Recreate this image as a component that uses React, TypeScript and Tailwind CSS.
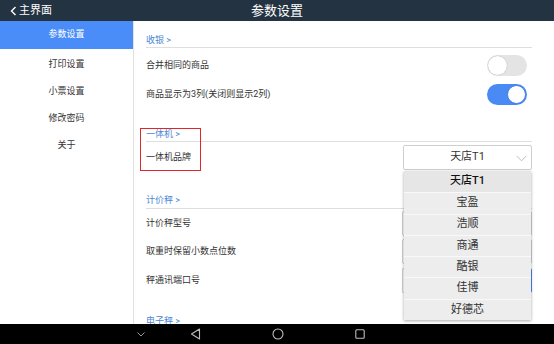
import React from "react";

const font = "font-['Roboto','Noto_Sans_CJK_SC',sans-serif]";

function Toggle({ on }: { on: boolean }) {
  return on ? (
    <div className="w-[40px] h-[21px] rounded-full bg-[#4a8af4] relative">
      <div className="absolute right-[1px] top-[1px] w-[19px] h-[19px] rounded-full bg-white border border-[#3f7fe8]" />
    </div>
  ) : (
    <div className="w-[40px] h-[21px] rounded-full bg-[#e4e4e4] relative">
      <div className="absolute left-[1px] top-[1px] w-[19px] h-[19px] rounded-full bg-white shadow-[0_0_1px_rgba(0,0,0,0.35)]" />
    </div>
  );
}

function Header({ text, pt }: { text: string; pt: string }) {
  return (
    <div className={`${pt} pb-[1px] border-b-[1.5px] border-[#dedede]`}>
      <div className="text-[9px] leading-[12px] text-[#4a87d6]">{text}</div>
    </div>
  );
}

export default function App() {
  const brands = ["天店T1", "宝盈", "浩顺", "商通", "酷银", "佳博", "好德芯"];
  return (
    <div className={`w-[554px] h-[344px] flex flex-col overflow-hidden bg-white ${font}`}>
      {/* top bar */}
      <div className="h-[21px] bg-[#243341] grid grid-cols-[1fr_auto_1fr] items-center text-white shrink-0">
        <div className="flex items-center pl-[10px]">
          <svg width="7" height="10" viewBox="0 0 7 10" className="mr-[2px]">
            <path d="M5.5 1 L1.5 5 L5.5 9" stroke="white" strokeWidth="1.4" fill="none" />
          </svg>
          <span className="text-[11px] leading-none">主界面</span>
        </div>
        <div className="text-[13px] leading-none">参数设置</div>
        <div />
      </div>

      {/* main */}
      <div className="flex h-[303px] shrink-0">
        {/* sidebar */}
        <div className="w-[134px] border-r border-[#e2e2e2] flex flex-col text-[9px] text-[#333]">
          <div className="h-[28px] bg-[#4b8df8] text-white flex items-center justify-center">参数设置</div>
          <div className="h-[27px] mt-[2px] flex items-center justify-center">打印设置</div>
          <div className="h-[27px] flex items-center justify-center">小票设置</div>
          <div className="h-[27px] flex items-center justify-center">修改密码</div>
          <div className="h-[27px] flex items-center justify-center">关于</div>
        </div>

        {/* content */}
        <div className="flex-1 relative overflow-hidden">
          <div className="pl-[12px] pr-[22px] text-[9px] text-[#333]">
            <Header text="收银 >" pt="pt-[13px]" />
            <div className="mt-[3px] h-[29px] flex items-center justify-between pr-[5px]">
              <span>合并相同的商品</span>
              <Toggle on={false} />
            </div>
            <div className="h-[29px] flex items-center justify-between pr-[5px]">
              <span>商品显示为3列(关闭则显示2列)</span>
              <Toggle on={true} />
            </div>

            <Header text="一体机 >" pt="pt-[19px]" />
            <div className="mt-[1px] h-[29px] flex items-center justify-between">
              <span>一体机品牌</span>
              <div className="w-[129px] h-[25px] border border-[#cfcfcf] rounded-[2px] relative flex items-center justify-center">
                <span className="text-[11px] text-[#333]">天店T1</span>
                <svg width="11" height="7" viewBox="0 0 11 7" className="absolute right-[4px] top-[9px]">
                  <path d="M0.5 0.8 L5.5 5.8 L10.5 0.8" stroke="#b5b5b5" strokeWidth="0.9" fill="none" />
                </svg>
              </div>
            </div>

            <div className="pt-[22px] pb-[2px] border-b-[1.5px] border-[#dedede]">
              <div className="text-[9px] leading-[12px] text-[#4a87d6]">计价秤 &gt;</div>
            </div>
            <div className="h-[28.5px] flex items-center justify-between">
              <span>计价秤型号</span>
              <div className="w-[130px] h-[25px] border border-[#cfcfcf] rounded-[2px]" />
            </div>
            <div className="h-[28.5px] flex items-center justify-between">
              <span>取重时保留小数点位数</span>
              <div className="w-[130px] h-[25px] border border-[#cfcfcf] rounded-[2px]" />
            </div>
            <div className="h-[28.5px] flex items-center justify-between">
              <span>秤通讯端口号</span>
              <div className="w-[130px] h-[25px] border border-[#cfcfcf] border-r-[#4a87e8] rounded-[2px]" />
            </div>

            <div className="pt-[20px] pb-[1px]">
              <div className="text-[9px] leading-[12px] text-[#4a87d6]">电子秤 &gt;</div>
            </div>
          </div>

          {/* annotation box */}
          <div className="absolute left-[6px] top-[107px] w-[61px] h-[43px] border-[1.5px] border-[#e0262a]" />

          {/* dropdown list */}
          <div className="absolute left-[270px] top-[150px] w-[127px] bg-[#ededed] shadow-[0_1px_3px_rgba(0,0,0,0.35)] flex flex-col">
            {brands.map((b, i) => (
              <div
                key={b}
                className={`h-[21.3px] flex items-center justify-center text-[11px] ${
                  i === 0 ? "bg-[#e6e6e6] text-[#111] font-medium" : "text-[#333] border-t border-[#f8f8f8]"
                }`}
              >
                {b}
              </div>
            ))}
          </div>
        </div>
      </div>

      {/* android nav bar */}
      <div className="h-[20px] bg-black flex items-center shrink-0">
        <div className="ml-[131px] w-[20px] flex justify-center">
          <svg width="8" height="5" viewBox="0 0 8 5">
            <path d="M0.5 0.5 L4 4 L7.5 0.5" stroke="#9a9a9a" strokeWidth="1" fill="none" />
          </svg>
        </div>
        <div className="ml-[34px] w-[20px] flex justify-center">
          <svg width="11" height="12" viewBox="0 0 11 12">
            <path d="M9.5 1 L1.5 6 L9.5 11 Z" stroke="#bdbdbd" strokeWidth="1.1" fill="none" strokeLinejoin="round" />
          </svg>
        </div>
        <div className="ml-[63px] w-[20px] flex justify-center">
          <svg width="12" height="12" viewBox="0 0 12 12">
            <circle cx="6" cy="6" r="5" stroke="#bdbdbd" strokeWidth="1.1" fill="none" />
          </svg>
        </div>
        <div className="ml-[62px] w-[20px] flex justify-center">
          <svg width="10" height="10" viewBox="0 0 10 10">
            <rect x="0.8" y="0.8" width="8.4" height="8.4" rx="1" stroke="#bdbdbd" strokeWidth="1.1" fill="none" />
          </svg>
        </div>
      </div>
    </div>
  );
}
